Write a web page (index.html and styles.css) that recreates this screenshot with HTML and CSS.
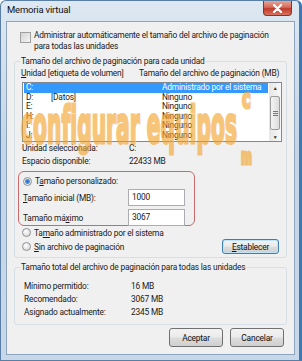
FILE: index.html
```html
<!DOCTYPE html>
<html lang="es">
<head>
  <meta charset="UTF-8">
  <title>Memoria virtual</title>
  <link rel="stylesheet" href="styles.css">
</head>
<body>

  <div class="window">
    <div class="titlebar">
      <span class="title">Memoria virtual</span>
      <span class="close">
        <svg width="11" height="9" viewBox="0 0 11 9"><path d="M2 1 L9 8 M9 1 L2 8" stroke="#fff" stroke-width="2.2" stroke-linecap="round"/></svg>
      </span>
    </div>

    <div class="client">
      <div class="check-row">
        <span class="checkbox"></span>
        <span>Administrar automáticamente el tamaño del archivo de paginación<br>para todas las unidades</span>
      </div>

      <fieldset class="group group-drives">
        <legend>Tamaño del archivo de paginación para cada unidad</legend>
        <div class="list-head">
          <span class="col-drive"><u>U</u>nidad [etiqueta de volumen]</span>
          <span>Tamaño del archivo de paginación (MB)</span>
        </div>
        <div class="listbox">
          <div class="rows">
            <div class="row selected"><span class="drive">C:</span><span class="vol"></span><span>Administrado por el sistema</span></div>
            <div class="row"><span class="drive">D:</span><span class="vol">[Datos]</span><span>Ninguno</span></div>
            <div class="row"><span class="drive">E:</span><span class="vol"></span><span>Ninguno</span></div>
            <div class="row"><span class="drive">H:</span><span class="vol"></span><span>Ninguno</span></div>
            <div class="row"><span class="drive">I:</span><span class="vol"></span><span>Ninguno</span></div>
            <div class="row"><span class="drive">J:</span><span class="vol"></span><span>Ninguno</span></div>
          </div>
          <div class="scrollbar">
            <div class="sb-btn">&#9650;</div>
            <div class="sb-track">
              <div class="sb-thumb"><span class="grip"></span></div>
            </div>
            <div class="sb-btn">&#9660;</div>
          </div>
        </div>

        <div class="info-row"><span class="info-label">Unidad seleccionada:</span><span>C:</span></div>
        <div class="info-row"><span class="info-label">Espacio disponible:</span><span>22433 MB</span></div>

        <div class="custom-box">
          <div class="radio-row"><span class="radio checked"></span><span>T<u>a</u>maño personalizado:</span></div>
          <div class="field-row"><span class="info-label"><u>T</u>amaño inicial (MB):</span><span class="textbox">1000</span></div>
          <div class="field-row"><span class="info-label">Tamaño má<u>x</u>imo</span><span class="textbox">3067</span></div>
        </div>

        <div class="radio-row plain"><span class="radio"></span><span>Ta<u>m</u>año administrado por el sistema</span></div>
        <div class="radio-row plain last">
          <span class="radio"></span><span><u>S</u>in archivo de paginación</span>
          <span class="button default"><u>E</u>stablecer</span>
        </div>
      </fieldset>

      <fieldset class="group group-total">
        <legend>Tamaño total del archivo de paginación para todas las unidades</legend>
        <div class="info-row"><span class="info-label">Mínimo permitido:</span><span>16 MB</span></div>
        <div class="info-row"><span class="info-label">Recomendado:</span><span>3067 MB</span></div>
        <div class="info-row"><span class="info-label">Asignado actualmente:</span><span>2345 MB</span></div>
      </fieldset>

      <div class="buttons">
        <span class="button">Aceptar</span>
        <span class="button">Cancelar</span>
      </div>
    </div>

    <!-- marca de agua -->
    <div class="watermark">
      <span class="wm-text">configurar equipos</span>
      <span class="wm-c">c</span>
      <span class="wm-m">m</span>
    </div>
  </div>

</body>
</html>
```

FILE: styles.css
```css
* {
  margin: 0;
  padding: 0;
  box-sizing: border-box;
}
html, body {
  width: 302px;
  height: 361px;
  overflow: hidden;
  background-color: #fff;
}
body {
  font-family: Roboto, sans-serif;
  font-size: 8.4px;
  letter-spacing: -0.2px;
  color: #1a1a1a;
}
u {
  text-decoration: underline;
  text-underline-offset: 1px;
}

.window {
  position: relative;
  width: 302px;
  height: 361px;
  background: linear-gradient(to bottom, #dde8f2 0%, #c6d6e6 40%, #c8d8e8 100%);
  border: 1px solid #5a7fa6;
  border-right: 3px solid #3c78b4;
  border-radius: 6px 6px 0 0;
  padding: 0 4px 5px 5px;
}
.titlebar {
  height: 20px;
  display: flex;
  justify-content: space-between;
  align-items: flex-start;
}
.title {
  margin-top: 3px;
  margin-left: 1px;
  font-size: 9.5px;
  color: #111;
}
.close {
  width: 29px;
  height: 15px;
  margin-right: 3px;
  display: flex;
  align-items: center;
  justify-content: center;
  background: linear-gradient(to bottom, #e8a598 0%, #d46a5a 45%, #c0392b 55%, #d9735e 100%);
  border: 1px solid #7a3a30;
  border-top: none;
  border-radius: 0 0 4px 4px;
}

.client {
  height: 334px;
  background-color: #f0f0f0;
  border: 1px solid #8da5bf;
  padding-top: 8px;
}

.check-row {
  display: flex;
  align-items: flex-start;
  margin-left: 13px;
  line-height: 11px;
}
.checkbox {
  width: 11px;
  height: 11px;
  margin-top: 2px;
  margin-right: 3px;
  border: 1px solid #a0a0a0;
  background: linear-gradient(135deg, #d4d4d4, #f4f4f4);
  flex-shrink: 0;
}

.group {
  border: 1px solid #d5dfe5;
  border-radius: 3px;
  margin: 0 7px 0 7px;
  padding: 0 4px 0 6px;
}
.group legend {
  padding: 0 1px;
  margin-left: -1px;
  line-height: 12px;
}
.group-drives {
  margin-top: 3px;
  height: 203px;
}

.list-head {
  display: flex;
  height: 13px;
  line-height: 13px;
}
.col-drive {
  width: 118px;
}

.listbox {
  display: flex;
  height: 60px;
  margin: 2px 0 0 1px;
  border: 1px solid #828790;
  background-color: #fff;
}
.rows {
  flex: 1;
  padding: 0 1px;
}
.row {
  display: flex;
  height: 9.6px;
  line-height: 9.6px;
  padding-left: 2px;
}
.row.selected {
  background-color: #3399ff;
  color: #fff;
}
.drive {
  width: 25px;
}
.vol {
  width: 111px;
}

.scrollbar {
  width: 12px;
  display: flex;
  flex-direction: column;
  background: linear-gradient(to right, #e6e6e6, #f8f8f8);
}
.sb-btn {
  height: 11px;
  font-size: 5px;
  line-height: 11px;
  text-align: center;
  color: #333;
}
.sb-track {
  flex: 1;
  padding: 2px 1px;
}
.sb-thumb {
  height: 34px;
  border: 1px solid #9c9c9c;
  border-radius: 2px;
  background: linear-gradient(to right, #f4f4f4, #dcdcdc);
  display: flex;
  align-items: center;
  justify-content: center;
}
.grip {
  width: 5px;
  height: 5px;
  border-top: 1px solid #777;
  border-bottom: 1px solid #777;
  position: relative;
}
.grip::after {
  content: '';
  position: absolute;
  left: 0;
  right: 0;
  top: 1px;
  border-top: 1px solid #777;
}

.info-row {
  display: flex;
  height: 13px;
  line-height: 13px;
  padding-left: 1px;
}
.info-label {
  width: 107px;
}
.group-drives .info-row:first-of-type {
  margin-top: 6px;
}

.custom-box {
  margin: 3px 0 0 -3px;
  width: 177px;
  height: 55px;
  border: 1px solid #c86a6a;
  border-radius: 6px;
  padding: 3px 0 0 4px;
}
.radio-row {
  display: flex;
  align-items: center;
  height: 12px;
}
.radio {
  width: 9px;
  height: 9px;
  border-radius: 50%;
  border: 1px solid #8f9194;
  background: radial-gradient(circle at 40% 35%, #fff, #d0d0d0);
  margin-right: 3px;
  flex-shrink: 0;
}
.radio.checked {
  background: radial-gradient(circle, #2a6cc4 0, #4a90e0 2px, #e9eef4 3px, #d4d8dc 100%);
}
.field-row {
  display: flex;
  align-items: center;
  height: 19px;
  margin-top: 1px;
}
.field-row .info-label {
  width: 105px;
}
.textbox {
  width: 57px;
  height: 17px;
  line-height: 15px;
  padding-left: 3px;
  background-color: #fff;
  border: 1px solid #abadb3;
}
.radio-row.plain {
  margin-left: 1px;
  height: 13px;
}
.radio-row.last {
  margin-top: 1px;
}

.button {
  display: inline-flex;
  align-items: center;
  justify-content: center;
  height: 19px;
  width: 54px;
  border: 1px solid #707070;
  border-radius: 3px;
  background: linear-gradient(to bottom, #f2f2f2 0%, #ebebeb 48%, #dddddd 52%, #cfcfcf 100%);
  color: #111;
}
.button.default {
  margin-left: auto;
  margin-right: 3px;
  width: 57px;
  height: 15px;
  border-color: #3c7fb1;
  box-shadow: inset 0 0 0 1px #bfe4f8;
}

.group-total {
  margin-top: 3px;
  height: 64px;
  padding-left: 8px;
}
.group-total legend {
  margin-left: -3px;
}
.group-total .info-row:first-of-type {
  margin-top: 7px;
}

.buttons {
  display: flex;
  justify-content: flex-end;
  gap: 7px;
  margin-top: 3px;
  margin-right: 10px;
}

/* marca de agua */
.watermark {
  position: absolute;
  left: 0;
  top: 0;
  width: 302px;
  height: 361px;
  pointer-events: none;
  opacity: 0.62;
  font-family: 'DejaVu Sans', sans-serif;
  font-weight: bold;
  letter-spacing: 0;
  line-height: 1;
  color: #f3a32a;
  -webkit-text-stroke: 3px #f3a32a;
  text-shadow: 1px 1px 0 #fff2d6, -1px -1px 0 #fff2d6, 1px -1px 0 #fff2d6, -1px 1px 0 #fff2d6;
}
.wm-text {
  position: absolute;
  left: 20px;
  top: 98px;
  font-size: 52px;
  white-space: nowrap;
  transform: scaleX(0.39);
  transform-origin: left top;
}
.wm-c {
  position: absolute;
  left: 241px;
  top: 84px;
  font-size: 27px;
  transform: scaleX(0.55);
  transform-origin: left top;
}
.wm-m {
  position: absolute;
  left: 240px;
  top: 146px;
  font-size: 21px;
  transform: scaleX(0.5);
  transform-origin: left top;
}
```
